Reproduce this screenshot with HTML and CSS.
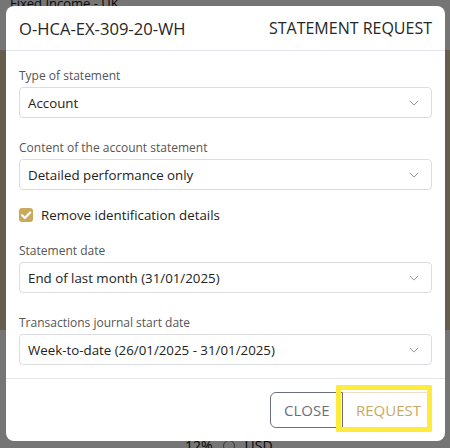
FILE: index.html
```html
<!DOCTYPE html>
<html lang="en">
<head>
  <meta charset="UTF-8" />
  <title>Statement request</title>
  <link rel="stylesheet" href="styles.css">
</head>
<body>
  <div class="backdrop">
    <div class="page-top">Fixed Income - UK</div>
    <div class="page-band"></div>
    <div class="page-bottom"><span>12%</span><span class="radio"></span><span>USD</span></div>
  </div>
  <div class="overlay"></div>

  <div class="dialog">
    <div class="dialog-header">
      <span class="ref">O-HCA-EX-309-20-WH</span>
      <span class="title">STATEMENT REQUEST</span>
    </div>

    <div class="dialog-body">
      <div class="field">
        <label>Type of statement</label>
        <div class="select"><span>Account</span><svg class="chev" viewBox="0 0 12 7"><path d="M1 1l5 5 5-5" /></svg></div>
      </div>
      <div class="field">
        <label>Content of the account statement</label>
        <div class="select"><span>Detailed performance only</span><svg class="chev" viewBox="0 0 12 7"><path d="M1 1l5 5 5-5" /></svg></div>
      </div>
      <div class="check">
        <span class="box"><svg viewBox="0 0 10 10"><path d="M2.2 5.2l2 2 3.8-4" /></svg></span>
        <span>Remove identification details</span>
      </div>
      <div class="field">
        <label>Statement date</label>
        <div class="select"><span>End of last month (31/01/2025)</span><svg class="chev" viewBox="0 0 12 7"><path d="M1 1l5 5 5-5" /></svg></div>
      </div>
      <div class="field">
        <label>Transactions journal start date</label>
        <div class="select"><span>Week-to-date (26/01/2025 - 31/01/2025)</span><svg class="chev" viewBox="0 0 12 7"><path d="M1 1l5 5 5-5" /></svg></div>
      </div>
    </div>

    <div class="dialog-footer">
      <div class="btn-group">
        <button class="btn close">CLOSE</button>
        <button class="btn request">REQUEST<span class="highlight"></span></button>
      </div>
    </div>
  </div>
</body>
</html>
```

FILE: styles.css
```css
* {
  box-sizing: border-box;
  font-family: 'Open Sans', 'Noto Sans', sans-serif;
}
body {
  margin: 0;
  width: 450px;
  height: 448px;
  position: relative;
  overflow: hidden;
  background: #f4f4f4;
}
.backdrop {
  position: absolute;
  inset: 0;
  overflow: hidden;
}
.page-top {
  padding: 0 0 0 10px;
  font-size: 13px;
  line-height: 14px;
  margin-top: -4px;
  color: #111;
}
.page-band {
  margin-top: 40px;
  height: 280px;
  background: #d4c4a2;
}
.page-bottom {
  position: absolute;
  left: 185px;
  top: 436px;
  display: flex;
  gap: 10px;
  align-items: center;
  font-size: 14px;
  color: #111;
}
.radio {
  width: 12px;
  height: 12px;
  border: 1px solid #777;
  border-radius: 50%;
}
.overlay {
  position: absolute;
  inset: 0;
  background: rgba(0, 0, 0, 0.52);
}
.dialog {
  position: relative;
  margin: 6px 5px 0 6px;
  height: 435px;
  background: #fff;
  border-radius: 8px;
  display: flex;
  flex-direction: column;
}
.dialog-header {
  flex-shrink: 0;
  height: 45px;
  padding: 0 13px;
  display: flex;
  justify-content: space-between;
  align-items: center;
  border-bottom: 1px solid #e3e3ea;
  font-size: 16px;
  font-weight: 500;
  color: #262626;
}
.dialog-header .ref {
  font-size: 16.6px;
}
.dialog-body {
  flex: 1;
  padding: 17px 13px 0 13px;
}
.field {
  margin-bottom: 22px;
}
.field:last-child {
  margin-bottom: 0;
}
.field label {
  display: block;
  font-size: 12px;
  color: #555;
  line-height: 15px;
  margin-bottom: 4px;
}
.select {
  height: 31px;
  border: 1px solid #dcdce3;
  border-radius: 4px;
  display: flex;
  align-items: center;
  justify-content: space-between;
  padding: 0 12px 0 8px;
  font-size: 13.3px;
  color: #222;
}
.chev {
  width: 10px;
  height: 6px;
  fill: none;
  stroke: #8a8a94;
  stroke-width: 1.1;
}
.check {
  display: flex;
  align-items: center;
  height: 20px;
  gap: 8px;
  font-size: 13.3px;
  color: #222;
  margin: -7px 0 18px;
}
.box {
  width: 14px;
  height: 14px;
  border-radius: 3px;
  background: #c9a95c;
  display: flex;
}
.box svg {
  width: 14px;
  height: 14px;
  fill: none;
  stroke: #fff;
  stroke-width: 1.6;
  stroke-linecap: round;
  stroke-linejoin: round;
}
.dialog-footer {
  flex-shrink: 0;
  height: 63px;
  border-top: 1px solid #e3e3ea;
  display: flex;
  justify-content: flex-end;
  align-items: center;
  padding: 0 13px 0 0;
}
.btn-group {
  display: flex;
}
.btn {
  height: 36px;
  padding: 0 13px;
  background: #fff;
  font-size: 15px;
  cursor: pointer;
}
.close {
  border: 1px solid #6b6f7a;
  border-radius: 6px 0 0 6px;
  color: #6b6f7a;
  width: 73px;
}
.request {
  position: relative;
  border: 1px solid #eadfc4;
  border-left: none;
  border-radius: 0 6px 6px 0;
  color: #c9a961;
  width: 89px;
}
.highlight {
  position: absolute;
  left: -7px;
  top: -8px;
  right: -1px;
  bottom: -5px;
  border: 5px solid #ffeb3b;
  border-radius: 1px;
}
```
